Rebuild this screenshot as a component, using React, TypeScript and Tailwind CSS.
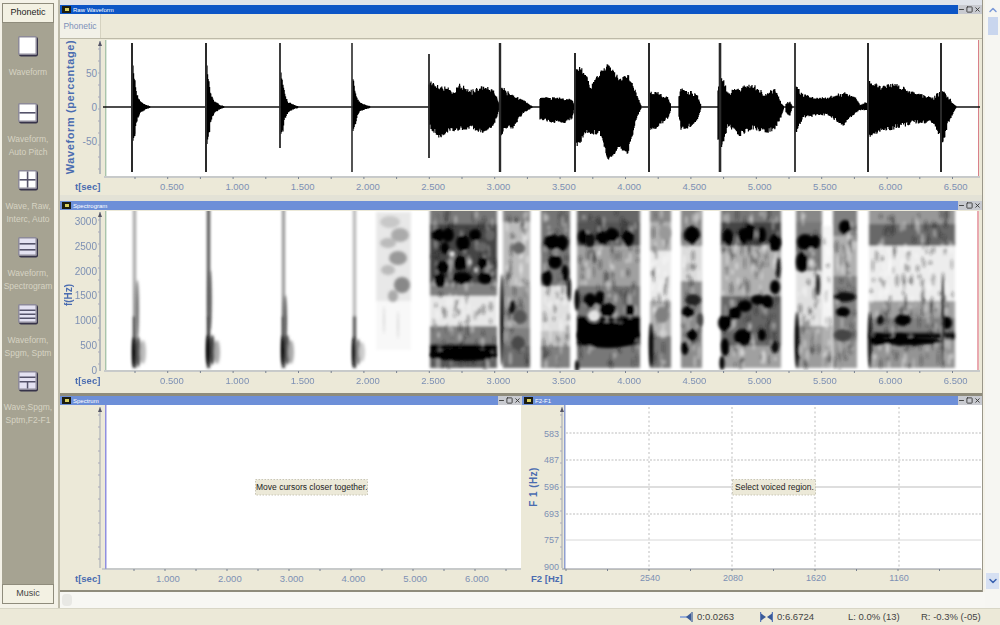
import { Minus, Square, X, ChevronUp, ChevronDown } from 'lucide-react';
import type { ReactNode } from 'react';

type Key = [number, number, number];
type Band = [number, number, string];
type Blob = [number, number, number, number, string];
type Seg = { x0: number; x1: number; bands: Band[]; blobs: Blob[] };

const FONT = "font-['Liberation_Sans',Arial,sans-serif]";
const AXIS = '#7d90b4';
const LABEL = '#4a6cb0';

// small seeded generator so the noise is the same on every render
function makeRand(seed: number) {
  let s = seed;
  return () => {
    s = (s * 16807) % 2147483647;
    return s / 2147483647;
  };
}

const decay = (x: number, k = 1): Key[] => [
  [x + 1, 107 - 40 * k, 107 + 36 * k],
  [x + 3, 107 - 26 * k, 107 + 27 * k],
  [x + 5, 107 - 13 * k, 107 + 14 * k],
  [x + 8, 107 - 6 * k, 107 + 6 * k],
  [x + 14, 105, 109],
  [x + 18, 106, 108],
];

const bursts: Key[][] = [
  decay(132),
  decay(206),
  decay(280, 0.85),
  decay(352, 0.7),
  [[429, 85, 122], [431, 82, 128], [440, 87, 137], [447, 88, 131], [453, 92, 130], [460, 85, 129], [470, 92, 127], [483, 87, 132], [493, 90, 125], [497, 98, 117], [499, 104, 110]],
  [[500, 88, 137], [505, 90, 130], [513, 95, 127], [523, 100, 113], [530, 105, 109], [532, 106, 108]],
  [[540, 98, 119], [553, 98, 122], [565, 99, 122], [572, 100, 118], [574, 104, 110]],
  [[576, 70, 145], [580, 67, 143], [586, 75, 132], [590, 88, 133], [600, 73, 133], [608, 65, 160], [620, 80, 147], [628, 75, 153], [636, 93, 120], [641, 105, 109]],
  [[650, 93, 130], [655, 92, 128], [668, 98, 118], [671, 105, 109]],
  [[679, 95, 118], [681, 90, 128], [690, 92, 127], [697, 95, 120], [701, 105, 109]],
  [[718, 90, 140], [722, 77, 146], [728, 93, 125], [740, 88, 135], [752, 85, 128], [767, 95, 132], [775, 88, 128], [781, 103, 117], [784, 106, 108]],
  [[786, 103, 113], [790, 102, 116], [792, 106, 108]],
  [[796, 87, 132], [803, 95, 118], [817, 98, 115], [827, 98, 115], [843, 93, 125], [855, 97, 113], [860, 105, 110], [867, 102, 110]],
  [[869, 82, 137], [880, 87, 130], [897, 85, 128], [913, 93, 123], [933, 98, 122], [943, 90, 143], [948, 97, 123], [956, 106, 108]],
];

const spikes: [number, number, number, number][] = [
  [132, 43, 172, 2], [206, 43, 172, 2], [280, 43, 148, 1.8], [352, 43, 172, 1.6],
  [429, 54, 158, 1.8], [500, 43, 172, 2.4], [575, 53, 172, 2], [649, 43, 172, 2],
  [720, 43, 172, 2.6], [795, 43, 172, 1.8], [868, 43, 172, 2], [941, 43, 172, 2],
];

function waveformPath() {
  const rand = makeRand(4711);
  let d = '';
  bursts.forEach((keys) => {
    for (let i = 0; i < keys.length - 1; i++) {
      const [a, t0, b0] = keys[i];
      const [c, t1, b1] = keys[i + 1];
      for (let x = a; x < c; x += 0.6) {
        const f = (x - a) / (c - a);
        const size = (b0 - t0) * (1 - f) + (b1 - t1) * f;
        const jit = Math.min(6, size * 0.16);
        const top = t0 + (t1 - t0) * f + rand() * jit - jit * 0.3;
        const bot = b0 + (b1 - b0) * f - rand() * jit + jit * 0.3;
        d += `M${x.toFixed(1)} ${top.toFixed(1)}V${bot.toFixed(1)}`;
      }
    }
  });
  return d;
}

const waveD = waveformPath();

const segs: Seg[] = [
  { x0: 133, x1: 136, bands: [[211, 320, '#a0a0a0'], [320, 368, '#333']], blobs: [[137, 310, 2, 30, '#777'], [138, 352, 3, 15, '#555'], [143, 352, 3, 12, '#bbb'], [134, 352, 2, 15, '#000']] },
  { x0: 207, x1: 210, bands: [[211, 320, '#444'], [320, 368, '#222']], blobs: [[210, 300, 1.5, 30, '#555'], [212, 350, 3, 15, '#444'], [217, 352, 3, 12, '#aaa'], [208, 350, 2, 15, '#000']] },
  { x0: 282, x1: 285, bands: [[211, 320, '#909090'], [320, 368, '#333']], blobs: [[285, 320, 2, 25, '#666'], [287, 350, 3, 15, '#555'], [291, 352, 3, 12, '#aaa'], [283, 350, 2, 15, '#000']] },
  { x0: 353, x1: 356, bands: [[211, 320, '#b0b0b0'], [320, 368, '#444']], blobs: [[358, 352, 3, 13, '#888'], [362, 352, 3, 10, '#ccc'], [354, 352, 2, 15, '#111']] },
  {
    x0: 376, x1: 411,
    bands: [[216, 305, '#e8e8e8'], [305, 350, '#f8f8f8']],
    blobs: [[390, 222, 10, 6, '#c8c8c8'], [400, 235, 9, 7, '#aaa'], [388, 243, 8, 5, '#bbb'], [398, 258, 9, 7, '#999'], [388, 270, 7, 5, '#bbb'], [402, 285, 8, 8, '#888'], [393, 296, 5, 6, '#aaa'], [384, 320, 1, 14, '#ddd'], [398, 325, 1, 14, '#ddd']],
  },
  {
    x0: 430, x1: 497,
    bands: [[211, 228, '#787878'], [228, 287, '#444'], [287, 300, '#808080'], [300, 330, '#e8e8e8'], [330, 348, '#7c7c7c'], [348, 362, '#000'], [362, 368, '#606060']],
    blobs: [[463, 355, 33, 6, '#000'], [438, 235, 6, 7, '#000'], [448, 235, 6, 7, '#000'], [463, 243, 7, 8, '#000'], [475, 235, 6, 6, '#000'], [443, 267, 7, 6, '#000'], [460, 263, 7, 7, '#000'], [462, 278, 10, 6, '#000'], [440, 280, 6, 7, '#000'], [483, 263, 5, 6, '#000'], [485, 278, 7, 6, '#000'], [445, 248, 4, 6, '#000'], [490, 235, 5, 6, '#666'], [482, 247, 6, 5, '#666'], [452, 254, 3, 3, '#ddd'], [470, 262, 2, 3, '#ccc'], [476, 270, 2, 3, '#ccc']],
  },
  {
    x0: 503, x1: 530,
    bands: [[211, 226, '#858585'], [226, 290, '#bcbcbc'], [290, 332, '#989898'], [332, 350, '#808080'], [350, 368, '#6c6c6c']],
    blobs: [[519, 248, 6, 6, '#666'], [512, 307, 3, 7, '#111'], [520, 317, 7, 7, '#555'], [518, 343, 7, 7, '#484848'], [502, 320, 1.8, 46, '#000']],
  },
  {
    x0: 541, x1: 570,
    bands: [[211, 230, '#747474'], [230, 290, '#767676'], [290, 335, '#e0e0e0'], [335, 350, '#c2c2c2'], [350, 368, '#808080']],
    blobs: [[552, 242, 8, 8, '#000'], [562, 243, 6, 8, '#000'], [555, 262, 7, 7, '#000'], [547, 278, 5, 8, '#000'], [565, 273, 3.5, 8, '#000'], [569, 290, 2, 12, '#111']],
  },
  {
    x0: 577, x1: 640,
    bands: [[211, 226, '#666'], [226, 250, '#555'], [250, 290, '#a0a0a0'], [290, 320, '#777'], [320, 350, '#000'], [350, 368, '#787878']],
    blobs: [[608, 335, 31, 13, '#000'], [585, 328, 6, 10, '#000'], [630, 328, 6, 10, '#000'], [583, 237, 5, 7, '#000'], [590, 240, 5, 7, '#111'], [602, 238, 6, 7, '#000'], [612, 235, 7, 7, '#000'], [628, 238, 6, 8, '#000'], [590, 300, 6, 7, '#000'], [600, 298, 5, 7, '#000'], [577, 300, 2.5, 11, '#000'], [608, 310, 8, 7, '#000'], [630, 310, 5, 6, '#000'], [594, 316, 6, 6, '#e4e4e4'], [577, 366, 2, 6, '#000']],
  },
  {
    x0: 650, x1: 671,
    bands: [[211, 226, '#888'], [226, 255, '#b0b0b0'], [255, 305, '#ebebeb'], [305, 340, '#b4b4b4'], [340, 368, '#787878']],
    blobs: [[662, 315, 7, 8, '#808080'], [665, 233, 6, 7, '#999'], [651, 345, 2.2, 22, '#000']],
  },
  {
    x0: 681, x1: 702,
    bands: [[211, 226, '#888'], [226, 250, '#888'], [250, 285, '#dcdcdc'], [285, 368, '#8c8c8c']],
    blobs: [[692, 235, 8, 9, '#000'], [693, 300, 8, 6, '#222'], [688, 312, 6, 6, '#000'], [692, 335, 5, 6, '#000'], [685, 348, 3.5, 7, '#000'], [700, 320, 3, 7, '#444']],
  },
  {
    x0: 721, x1: 781,
    bands: [[211, 226, '#787878'], [226, 250, '#444'], [250, 300, '#b0b0b0'], [300, 350, '#666'], [350, 368, '#a0a0a0']],
    blobs: [[728, 237, 5, 8, '#000'], [743, 236, 5, 8, '#000'], [750, 232, 5, 9, '#000'], [762, 235, 4, 8, '#000'], [775, 243, 6, 9, '#000'], [725, 323, 7, 8, '#000'], [735, 313, 6, 7, '#000'], [745, 306, 7, 6, '#000'], [758, 300, 7, 5, '#000'], [767, 302, 6, 7, '#000'], [775, 287, 5, 7, '#000'], [778, 268, 2.5, 11, '#111'], [743, 337, 9, 8, '#000'], [762, 335, 4, 6, '#000'], [775, 347, 4, 6, '#111'], [725, 347, 4, 9, '#000'], [722, 363, 2.5, 7, '#000']],
  },
  {
    x0: 796, x1: 822,
    bands: [[211, 226, '#888'], [226, 275, '#787878'], [275, 330, '#e0e0e0'], [330, 368, '#9c9c9c']],
    blobs: [[805, 242, 8, 8, '#000'], [815, 242, 5, 7, '#000'], [802, 262, 6, 10, '#000'], [818, 285, 2.2, 11, '#222'], [797, 340, 2.2, 28, '#000']],
  },
  {
    x0: 822, x1: 832,
    bands: [[230, 330, '#f4f4f4'], [330, 368, '#b0b0b0']],
    blobs: [],
  },
  {
    x0: 833, x1: 857,
    bands: [[211, 240, '#808080'], [240, 280, '#b0b0b0'], [280, 345, '#828282'], [345, 368, '#9c9c9c']],
    blobs: [[845, 227, 6, 7, '#000'], [845, 297, 11, 5, '#111'], [843, 312, 7, 5, '#000'], [843, 335, 9, 6, '#444']],
  },
  {
    x0: 869, x1: 955,
    bands: [[211, 228, '#989898'], [228, 250, '#686868'], [250, 305, '#ededed'], [305, 322, '#a0a0a0'], [322, 336, '#808080'], [336, 344, '#111'], [344, 368, '#949494']],
    blobs: [[908, 341, 34, 4, '#000'], [903, 320, 8, 6, '#000'], [947, 323, 5, 6, '#000'], [880, 320, 4, 5, '#111'], [878, 340, 7, 6, '#000'], [900, 340, 9, 6, '#000'], [915, 341, 6, 5, '#000'], [943, 320, 1.4, 48, '#222'], [870, 340, 2, 28, '#111']],
  },
];

function specNoise() {
  const rand = makeRand(2024);
  const out: Blob[] = [];
  segs.slice(5).forEach((s) => {
    const n = Math.round((s.x1 - s.x0) * 2.4);
    for (let i = 0; i < n; i++) {
      const light = rand() > 0.58;
      out.push([s.x0 + 2 + rand() * (s.x1 - s.x0 - 4), 213 + rand() * 153, 1 + rand() * 1.2, 2 + rand() * 5, light ? '#fff' : '#222']);
    }
  });
  return out;
}

const noise = specNoise();

const timeLabels = ['0.500', '1.000', '1.500', '2.000', '2.500', '3.000', '3.500', '4.000', '4.500', '5.000', '5.500', '6.000', '6.500'];

function TimeAxis({ y }: { y: number }) {
  return (
    <g>
      <line x1={104} x2={980} y1={y} y2={y} stroke="#a3abbc" strokeWidth={1} />
      {Array.from({ length: 27 }, (_, i) => (
        <line key={i} x1={135 + i * 32.7} x2={135 + i * 32.7} y1={y} y2={y + 2} stroke="#77808f" />
      ))}
      {timeLabels.map((t, i) => (
        <text key={t} x={172 + i * 65.3} y={y + 13} fontSize={9.5} fill={AXIS} textAnchor="middle">{t}</text>
      ))}
      <text x={75} y={y + 13} fontSize={9.5} fontWeight={700} fill={LABEL}>t[sec]</text>
    </g>
  );
}

function YAxis({ x, y0, y1, color = '#7f8aa0' }: { x: number; y0: number; y1: number; color?: string }) {
  return (
    <g>
      <line x1={x} x2={x} y1={y0} y2={y1} stroke={color} strokeWidth={1} />
      <path d={`M${x - 2} ${y0 + 5}L${x} ${y0}L${x + 2} ${y0 + 5}Z`} fill="#556" />
      {Array.from({ length: Math.floor((y1 - y0) / 12) }, (_, i) => (
        <line key={i} x1={x - 2} x2={x} y1={y0 + 8 + i * 12} y2={y0 + 8 + i * 12} stroke="#aab" />
      ))}
    </g>
  );
}

function WaveformChart() {
  return (
    <svg className={`block ${FONT}`} width={922} height={156} viewBox="60 39 922 156">
      <rect x={106} y={40} width={873} height={136} fill="#fff" />
      <rect x={105} y={40} width={1.4} height={136} fill="#a9c4aa" />
      <rect x={978} y={40} width={1} height={136} fill="#d9808a" />
      <g fill={AXIS} fontSize={10}>
        <text x={97} y={77} textAnchor="end">50</text>
        <text x={97} y={111} textAnchor="end">0</text>
        <text x={97} y={145} textAnchor="end">-50</text>
      </g>
      <text transform="translate(74 107) rotate(-90)" fontSize={11} fontWeight={700} fill={LABEL} textAnchor="middle" letterSpacing={0.6}>Waveform (percentage)</text>
      <YAxis x={100} y0={41} y1={174} />
      <path d="M103 107H980" stroke="#111" strokeWidth={1.6} />
      <path d={waveD} stroke="#000" strokeWidth={1.2} fill="none" />
      {spikes.map(([x, a, b, w]) => (
        <line key={x} x1={x} x2={x} y1={a} y2={b} stroke="#2a2a2a" strokeWidth={w} />
      ))}
      <TimeAxis y={177} />
    </svg>
  );
}

function SpectrogramChart() {
  return (
    <svg className={`block ${FONT}`} width={922} height={183} viewBox="60 210 922 183">
      <defs>
        <filter id="bandBlur" x="-2%" y="-5%" width="104%" height="110%">
          <feGaussianBlur stdDeviation="1.6" />
        </filter>
        <filter id="specBlur" x="-2%" y="-5%" width="104%" height="110%">
          <feGaussianBlur stdDeviation="1.4" />
        </filter>
        <clipPath id="specClip">
          <rect x={106} y={211} width={873} height={159} />
        </clipPath>
      </defs>
      <rect x={106} y={211} width={873} height={159} fill="#fff" />
      <g clipPath="url(#specClip)">
        <g filter="url(#bandBlur)">
          {segs.map((s) =>
            s.bands.map(([a, b, g]) => (
              <rect key={`${s.x0}-${a}`} x={s.x0} y={a - 4} width={s.x1 - s.x0} height={b - a + 4} fill={g} />
            ))
          )}
        </g>
        <g filter="url(#specBlur)">
          {noise.map(([x, y, rx, ry, g], i) => (
            <ellipse key={i} cx={x} cy={y} rx={rx} ry={ry} fill={g} opacity={0.35} />
          ))}
          {segs.map((s) =>
            s.blobs.map(([x, y, rx, ry, g]) => (
              <ellipse key={`${s.x0}-${x}-${y}`} cx={x} cy={y} rx={rx} ry={ry} fill={g} />
            ))
          )}
        </g>
      </g>
      <rect x={105} y={211} width={1.4} height={159} fill="#a9c4aa" />
      <rect x={977} y={211} width={2} height={159} fill="#e9a9b0" />
      <g fill={AXIS} fontSize={10}>
        {['3000', '2500', '2000', '1500', '1000', '500', '0'].map((t, i) => (
          <text key={t} x={97} y={225 + i * 24.8} textAnchor="end">{t}</text>
        ))}
      </g>
      <text transform="translate(72 295) rotate(-90)" fontSize={10} fontWeight={700} fill={LABEL} textAnchor="middle">f(Hz)</text>
      <YAxis x={100} y0={212} y1={371} />
      <TimeAxis y={371} />
    </svg>
  );
}

function SpectrumChart() {
  const labels = ['1.000', '2.000', '3.000', '4.000', '5.000', '6.000'];
  return (
    <svg className={`block ${FONT}`} width={462} height={185} viewBox="60 405 462 185">
      <rect x={106} y={405} width={415} height={163} fill="#fff" />
      <rect x={105} y={405} width={1.5} height={164} fill="#8f8fe0" />
      <YAxis x={100} y0={407} y1={568} color="#a0a6b0" />
      <line x1={102} x2={521} y1={569} y2={569} stroke="#a3abbc" />
      {Array.from({ length: 13 }, (_, i) => (
        <line key={i} x1={134 + i * 31} x2={134 + i * 31} y1={569} y2={571} stroke="#77808f" />
      ))}
      {labels.map((t, i) => (
        <text key={t} x={168 + i * 61.8} y={582} fontSize={9.5} fill={AXIS} textAnchor="middle">{t}</text>
      ))}
      <text x={75} y={582} fontSize={9.5} fontWeight={700} fill={LABEL}>t[sec]</text>
      <rect x={255.5} y={479.5} width={112} height={15.5} fill="#ece9d8" stroke="#c9c6b6" strokeDasharray="1.5 1.5" />
      <text x={256} y={490} fontSize={8.5} fill="#222">Move cursors closer together.</text>
    </svg>
  );
}

function FormantChart() {
  const ys = [433, 460, 487, 514, 540];
  const xs = [649, 732, 815, 899];
  const f1 = ['583', '487', '596', '693', '757', '900'];
  const f2 = ['2540', '2080', '1620', '1160'];
  return (
    <svg className={`block ${FONT}`} width={460} height={185} viewBox="522 405 460 185">
      <rect x={565} y={405} width={417} height={164} fill="#fff" />
      <rect x={564} y={405} width={1.5} height={164} fill="#8f9fd0" />
      {ys.map((y) => (
        <line key={y} x1={566} x2={981} y1={y} y2={y} stroke={y === 540 ? '#d8d8d8' : '#bdbdbd'} strokeWidth={1} strokeDasharray={y === 487 || y === 540 ? undefined : '2 1.5'} />
      ))}
      {xs.map((x) => (
        <line key={x} x1={x} x2={x} y1={407} y2={569} stroke="#bdbdbd" strokeDasharray="2 2.5" />
      ))}
      <YAxis x={562} y0={407} y1={568} color="#a0a6b0" />
      <line x1={562} x2={981} y1={569} y2={569} stroke="#8a8f98" />
      {Array.from({ length: 10 }, (_, i) => (
        <line key={i} x1={566 + i * 41.5} x2={566 + i * 41.5} y1={569} y2={571} stroke="#77808f" />
      ))}
      {f1.map((t, i) => (
        <text key={t} x={559} y={436.5 + i * 26.7} fontSize={9} fill={AXIS} textAnchor="end">{t}</text>
      ))}
      <text transform="translate(537 487) rotate(-90)" fontSize={10} fontWeight={700} letterSpacing={0.4} fill={LABEL} textAnchor="middle">F 1 (Hz)</text>
      {f2.map((t, i) => (
        <text key={t} x={650 + i * 83} y={581} fontSize={9} fill={AXIS} textAnchor="middle">{t}</text>
      ))}
      <text x={531} y={582} fontSize={9.5} fontWeight={700} fill={LABEL}>F2 [Hz]</text>
      <rect x={732.5} y={479.5} width={83} height={15.5} fill="#ece9d8" stroke="#c9c6b6" strokeDasharray="1.5 1.5" />
      <text x={735} y={490} fontSize={8.5} fill="#222">Select voiced region.</text>
    </svg>
  );
}

function TitleBar({ title, active = false }: { title: string; active?: boolean }) {
  return (
    <div className={`flex h-[9px] items-center ${active ? 'bg-[#0c55c6]' : 'bg-[#6d8fd8]'}`}>
      <div className="ml-[2px] flex h-[7px] w-[9px] items-center justify-center bg-[#1c1c10]">
        <div className="h-[3px] w-[4px] bg-[#d8d060]" />
      </div>
      <span className="ml-[2px] text-[6px] leading-none text-white">{title}</span>
      <div className="ml-auto flex h-full items-center gap-px bg-[#c8cad0] pr-[1px] text-[#333]">
        <Minus size={7} strokeWidth={3} />
        <Square size={7} strokeWidth={3} />
        <X size={7} strokeWidth={3} />
      </div>
    </div>
  );
}

function ModeIcon({ kind }: { kind: number }) {
  const lavender = kind >= 3;
  return (
    <svg width={22} height={22} viewBox="0 0 22 22" className="block">
      <rect x={2} y={2} width={19} height={19.5} rx={2} fill="#37344a" />
      <rect x={1} y={1} width={19} height={19} rx={1.5} fill="#8d8a98" />
      <rect x={2.5} y={2.5} width={16} height={16} fill={lavender ? '#e4e2f2' : '#fff'} />
      {kind === 1 && <rect x={2.5} y={10} width={16} height={1.6} fill="#55536a" />}
      {kind === 2 && (
        <>
          <rect x={2.5} y={10} width={16} height={1.6} fill="#55536a" />
          <rect x={9.8} y={2.5} width={1.6} height={16} fill="#55536a" />
        </>
      )}
      {kind === 3 && (
        <>
          <rect x={2.5} y={7} width={16} height={1.6} fill="#55536a" />
          <rect x={2.5} y={13} width={16} height={1.6} fill="#55536a" />
        </>
      )}
      {kind === 4 && (
        <>
          <rect x={2.5} y={6.5} width={16} height={1.5} fill="#55536a" />
          <rect x={2.5} y={10.5} width={16} height={1.5} fill="#55536a" />
          <rect x={2.5} y={14.5} width={16} height={1.5} fill="#55536a" />
        </>
      )}
      {kind === 5 && (
        <>
          <rect x={2.5} y={6.5} width={16} height={1.5} fill="#55536a" />
          <rect x={2.5} y={11} width={16} height={1.5} fill="#55536a" />
          <rect x={9.8} y={11} width={1.5} height={7.5} fill="#55536a" />
        </>
      )}
    </svg>
  );
}

const modes = [
  ['Waveform'],
  ['Waveform,', 'Auto Pitch'],
  ['Wave, Raw,', 'Interc, Auto'],
  ['Waveform,', 'Spectrogram'],
  ['Waveform,', 'Spgm, Sptm'],
  ['Wave,Spgm,', 'Sptm,F2-F1'],
];

function Sidebar() {
  return (
    <div className="w-[60px] shrink-0 border-r-2 border-[#bdbaa9] pl-[2px] pt-[3px]">
      <div className="flex h-[601px] w-[52px] flex-col bg-[#a6a392]">
        <div className="flex h-[20px] items-center justify-center border border-[#8f8c7c] bg-[#f3f1e3] text-[9px] text-[#222]">Phonetic</div>
        <div className="flex-1 pt-[12px]">
          {modes.map((lines, i) => (
            <div key={i} className="flex h-[67px] flex-col items-center">
              <ModeIcon kind={i} />
              <div className="mt-[9px] text-center text-[8.5px] leading-[13px] whitespace-nowrap text-[#d6d3c3]">
                {lines.map((l) => (
                  <div key={l}>{l}</div>
                ))}
              </div>
            </div>
          ))}
        </div>
        <div className="flex h-[20px] items-center justify-center border border-[#8f8c7c] bg-[#f3f1e3] text-[9px] text-[#444]">Music</div>
      </div>
    </div>
  );
}

function StatusItem({ icon, text, className }: { icon?: ReactNode; text: string; className: string }) {
  return (
    <div className={`flex items-center gap-[4px] whitespace-nowrap ${className}`}>
      {icon}
      <span>{text}</span>
    </div>
  );
}

const cursorLeft = (
  <svg width={13} height={10} viewBox="0 0 13 10" className="block">
    <path d="M0 5H7" stroke="#7c9ad8" strokeWidth={1.5} />
    <path d="M6 5L11 1V9Z" fill="#3a5a98" />
    <path d="M12 0V10" stroke="#3a5a98" strokeWidth={1.2} />
  </svg>
);

const cursorSpan = (
  <svg width={13} height={10} viewBox="0 0 13 10" className="block">
    <path d="M0.6 0V10M12.4 0V10" stroke="#5a78b8" strokeWidth={1.2} />
    <path d="M1 1.5L6 5L1 8.5Z" fill="#3a5a98" />
    <path d="M12 1.5L7 5L12 8.5Z" fill="#3a5a98" />
  </svg>
);

export default function App() {
  return (
    <div className={`flex h-[625px] w-[1000px] flex-col overflow-hidden bg-[#f4f2e8] blur-[0.55px] ${FONT}`}>
      <div className="flex h-[608px]">
        <Sidebar />
        <div className="w-[925px] shrink-0">
          <div className="w-[923px] border-r border-[#9a978a] bg-[#ece9d8]">
            <div className="h-[5px] bg-[#dfe3ea]" />
            <TitleBar title="Raw Waveform" active />
            <div className="flex h-[25px] border-b border-[#bdbaa8]">
              <div className="flex w-[41px] items-center justify-center border-r border-[#d5d2c0] bg-[#f2f1e8] text-[8.5px] text-[#7c90b8]">Phonetic</div>
            </div>
            <WaveformChart />
            <div className="h-[6px] bg-[#e3e2d6]" />
            <TitleBar title="Spectrogram" />
            <SpectrogramChart />
            <div className="h-[3px] bg-[#8f8c7c]" />
            <div className="flex">
              <div className="w-[462px]">
                <TitleBar title="Spectrum" />
                <SpectrumChart />
              </div>
              <div className="w-[460px]">
                <TitleBar title="F2-F1" />
                <FormantChart />
              </div>
            </div>
            <div className="h-[2px] bg-[#8f8c7c]" />
          </div>
          <div className="flex h-[16px] items-center bg-[#f7f7f3] pl-[2px]">
            <div className="h-[12px] w-[10px] rounded-sm bg-[#e8e8e4]" />
          </div>
        </div>
        <div className="flex w-[15px] shrink-0 flex-col items-center bg-[#f6f6f2] pt-[4px]">
          <ChevronUp size={12} strokeWidth={3} className="text-[#7c9ad8]" />
          <div className="mt-[1px] h-[18px] w-[10px] bg-[#c9d6ee]" />
          <div className="mt-auto mb-[19px] flex h-[16px] w-[13px] items-center justify-center bg-[#d6e0f2]">
            <ChevronDown size={12} strokeWidth={3} className="text-[#3a62b0]" />
          </div>
        </div>
      </div>
      <div className="flex h-[17px] items-center border-t border-[#d8d6c6] bg-[#ece9d8] text-[9.5px] text-[#444]">
        <StatusItem icon={cursorLeft} text="0:0.0263" className="ml-[680px] w-[80px]" />
        <StatusItem icon={cursorSpan} text="0:6.6724" className="w-[88px]" />
        <StatusItem text="L: 0.0% (13)" className="w-[73px]" />
        <StatusItem text="R: -0.3% (-05)" className="w-[70px]" />
      </div>
    </div>
  );
}
